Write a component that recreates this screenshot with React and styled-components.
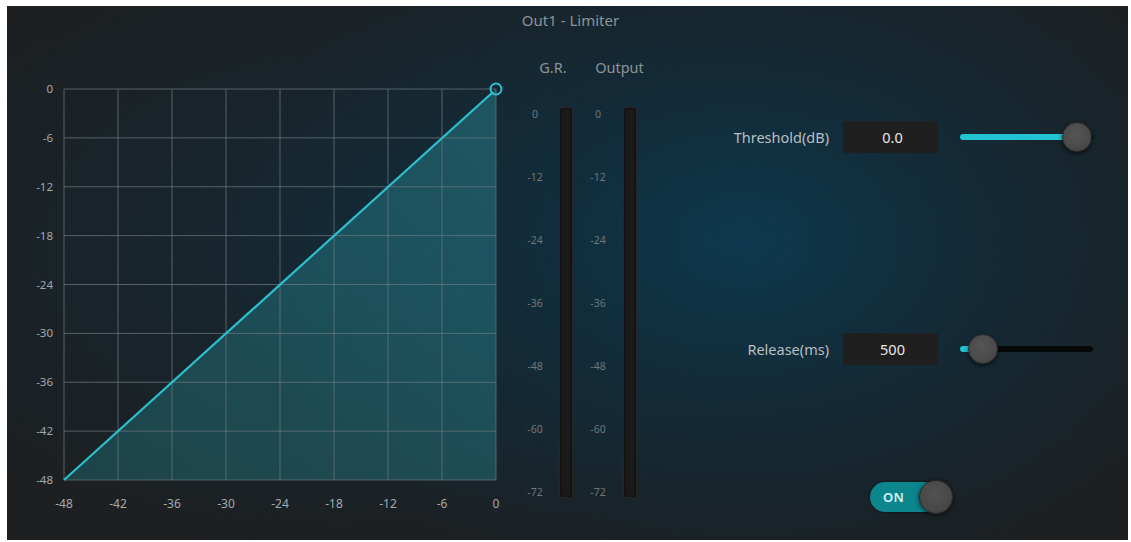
import React from "react";
import styled, { createGlobalStyle } from "styled-components";

const Global = createGlobalStyle`
  html, body { margin: 0; padding: 0; background: #ffffff; }
  body { font-family: "Noto Sans", "Open Sans", sans-serif; }
  #root { width: 1131px; height: 542px; overflow: hidden; }
`;

const Panel = styled.div`
  margin: 6px 3px 0 7px;
  width: 1121px;
  height: 534px;
  display: flex;
  flex-direction: column;
  background:
    radial-gradient(ellipse 520px 360px at 66% 44%, rgba(13, 58, 80, 0.95) 0%, rgba(16, 46, 62, 0.8) 40%, rgba(29, 33, 36, 0) 100%),
    radial-gradient(ellipse 500px 320px at 30% 45%, rgba(18, 44, 58, 0.7) 0%, rgba(29, 33, 36, 0) 100%),
    #1d1f21;
`;

const Title = styled.div`
  height: 28px;
  line-height: 28px;
  padding-left: 6px;
  text-align: center;
  font-size: 15px;
  color: #8d9397;
`;

const Body = styled.div`
  flex: 1;
  display: flex;
  flex-direction: row;
`;

const Chart = styled.svg`
  width: 513px;
  height: 496px;
  display: block;
  flex: none;
`;

const MeterGroup = styled.div`
  width: 140px;
  flex: none;
  display: flex;
  flex-direction: row;
  gap: 15px;
  padding-left: 5px;
  box-sizing: border-box;
`;

const Meter = styled.div`
  display: flex;
  flex-direction: column;
`;

/* header is nudged sideways without changing the column width */
const MeterHeader = styled.div`
  margin: 24px -${(p) => p.$shift}px 0 ${(p) => p.$shift}px;
  height: 18px;
  line-height: 18px;
  font-size: 14.5px;
  color: #8b9397;
  text-align: center;
  white-space: nowrap;
`;

const MeterBody = styled.div`
  margin-top: 31px;
  display: flex;
  flex-direction: row;
  gap: ${(p) => p.$gap}px;
`;

const Scale = styled.div`
  width: 20px;
  height: 391px;
  display: flex;
  flex-direction: column;
  justify-content: space-between;
  align-items: center;
  padding: 1px 0 0;
  box-sizing: border-box;
`;

const ScaleLabel = styled.span`
  font-size: 10.5px;
  line-height: 12px;
  color: #6f787c;
  white-space: nowrap;
`;

const Bar = styled.div`
  width: 14px;
  height: 391px;
  box-sizing: border-box;
  border-radius: 3px;
  background: #1a1a1a;
  border: 1px solid #262626;
  box-shadow: inset 0 0 3px rgba(0, 0, 0, 0.8);
`;

const Controls = styled.div`
  flex: 1;
  display: flex;
  flex-direction: column;
  padding-top: 86px;
`;

const ControlRow = styled.div`
  display: flex;
  flex-direction: row;
  align-items: center;
  height: 34px;
  margin-bottom: ${(p) => p.$after}px;
`;

const Label = styled.div`
  width: 169px;
  flex: none;
  text-align: right;
  font-size: 14.5px;
  color: #b9bfc3;
  white-space: nowrap;
`;

const ValueBox = styled.div`
  height: 32px;
  width: 95px;
  flex: none;
  margin-left: 14px;
  box-sizing: border-box;
  background: #201f1f;
  border-radius: 2px;
  display: flex;
  align-items: center;
  justify-content: center;
  font-size: 14.5px;
  color: #e6e8e9;
  padding-left: 4px;
`;

const Slider = styled.div`
  position: relative;
  flex: none;
  width: 133px;
  height: 34px;
  margin-left: 22px;
`;

const Track = styled.div`
  position: absolute;
  left: 0;
  right: 0;
  top: 14px;
  height: 6px;
  border-radius: 3px;
  background: #070808;
`;

const Fill = styled.div`
  position: absolute;
  left: 0;
  top: 14px;
  height: 6px;
  border-radius: 3px;
  background: #22c3d3;
`;

const Thumb = styled.div`
  position: absolute;
  top: 2px;
  width: 30px;
  height: 30px;
  margin-left: -15px;
  border-radius: 50%;
  box-sizing: border-box;
  background: radial-gradient(circle at 45% 40%, #555555 0%, #4a4a4a 60%, #404040 100%);
  border: 1px solid #2b2b2b;
  box-shadow: 0 2px 4px rgba(0, 0, 0, 0.6);
`;

const ToggleRow = styled.div`
  display: flex;
  padding-left: 210px;
`;

const Toggle = styled.div`
  position: relative;
  width: 83px;
  height: 34px;
  display: flex;
  align-items: center;
`;

const Pill = styled.div`
  width: 70px;
  height: 30px;
  border-radius: 15px;
  background: #0c858c;
  box-shadow: 0 0 3px rgba(0, 0, 0, 0.7);
  display: flex;
  align-items: center;
  padding-left: 13px;
  box-sizing: border-box;
  font-size: 13px;
  font-weight: 600;
  color: #d6f2f2;
  letter-spacing: 0.3px;
`;

const Knob = styled.div`
  position: absolute;
  left: 49px;
  top: 0;
  width: 34px;
  height: 34px;
  border-radius: 50%;
  box-sizing: border-box;
  background: radial-gradient(circle at 45% 40%, #525252 0%, #484848 60%, #3c3c3c 100%);
  border: 1px solid #2a2a2a;
  box-shadow: 0 1px 4px rgba(0, 0, 0, 0.7);
`;

const X0 = 57;
const X1 = 489;
const Y0 = 55;
const Y1 = 446;
const STEPS = [0, 1, 2, 3, 4, 5, 6, 7, 8];

function TransferChart() {
  const cw = (X1 - X0) / 8;
  const ch = (Y1 - Y0) / 8;
  return (
    <Chart viewBox="0 0 513 496">
      <defs>
        <linearGradient id="area" x1="0" y1="1" x2="1" y2="0">
          <stop offset="0" stopColor="#1f6f78" stopOpacity="0.45" />
          <stop offset="1" stopColor="#2a8c98" stopOpacity="0.45" />
        </linearGradient>
      </defs>
      <polygon points={`${X0},${Y1} ${X1},${Y0} ${X1},${Y1}`} fill="url(#area)" />
      {STEPS.map((i) => (
        <line
          key={`v${i}`}
          x1={X0 + i * cw}
          x2={X0 + i * cw}
          y1={Y0}
          y2={Y1}
          stroke="#6a777c"
          strokeOpacity="0.75"
          strokeWidth="1"
        />
      ))}
      {STEPS.map((i) => (
        <line
          key={`h${i}`}
          x1={X0}
          x2={X1}
          y1={Y0 + i * ch}
          y2={Y0 + i * ch}
          stroke="#6a777c"
          strokeOpacity="0.75"
          strokeWidth="1"
        />
      ))}
      <line x1={X0} y1={Y1} x2={X1 - 3} y2={Y0 + 3} stroke="#2cc0cf" strokeWidth="2.2" />
      <circle cx={X1} cy={Y0} r="5.5" fill="none" stroke="#2cc0cf" strokeWidth="2" />
      {STEPS.map((i) => (
        <text
          key={`yl${i}`}
          x={46}
          y={Y0 + i * ch + 4}
          textAnchor="end"
          fontSize="11.5"
          fill="#a3a9ad"
          fontFamily="Noto Sans, sans-serif"
        >
          {i === 0 ? "0" : `-${i * 6}`}
        </text>
      ))}
      {STEPS.map((i) => (
        <text
          key={`xl${i}`}
          x={X0 + i * cw}
          y={474}
          textAnchor="middle"
          fontSize="12"
          fill="#a3a9ad"
          fontFamily="Noto Sans, sans-serif"
        >
          {i === 8 ? "0" : `-${(8 - i) * 6}`}
        </text>
      ))}
    </Chart>
  );
}

const SCALE = ["0", "-12", "-24", "-36", "-48", "-60", "-72"];

function LevelMeter({ title, shift, gap }) {
  return (
    <Meter>
      <MeterHeader $shift={shift}>{title}</MeterHeader>
      <MeterBody $gap={gap}>
        <Scale>
          {SCALE.map((s) => (
            <ScaleLabel key={s}>{s}</ScaleLabel>
          ))}
        </Scale>
        <Bar />
      </MeterBody>
    </Meter>
  );
}

function ParamSlider({ value }) {
  // thumb travels between 16px and 117px of the 133px track
  const pos = 16 + value * 101;
  return (
    <Slider>
      <Track />
      <Fill style={{ width: `${pos}px` }} />
      <Thumb style={{ left: `${pos}px` }} />
    </Slider>
  );
}

export default function App() {
  return (
    <>
      <Global />
      <Panel>
        <Title>Out1 - Limiter</Title>
        <Body>
          <TransferChart />
          <MeterGroup>
            <LevelMeter title="G.R." shift={4} gap={14} />
            <LevelMeter title="Output" shift={7} gap={15} />
          </MeterGroup>
          <Controls>
            <ControlRow $after={178}>
              <Label>Threshold(dB)</Label>
              <ValueBox>0.0</ValueBox>
              <ParamSlider value={1} />
            </ControlRow>
            <ControlRow $after={114}>
              <Label>Release(ms)</Label>
              <ValueBox>500</ValueBox>
              <ParamSlider value={0.07} />
            </ControlRow>
            <ToggleRow>
              <Toggle>
                <Pill>ON</Pill>
                <Knob />
              </Toggle>
            </ToggleRow>
          </Controls>
        </Body>
      </Panel>
    </>
  );
}
